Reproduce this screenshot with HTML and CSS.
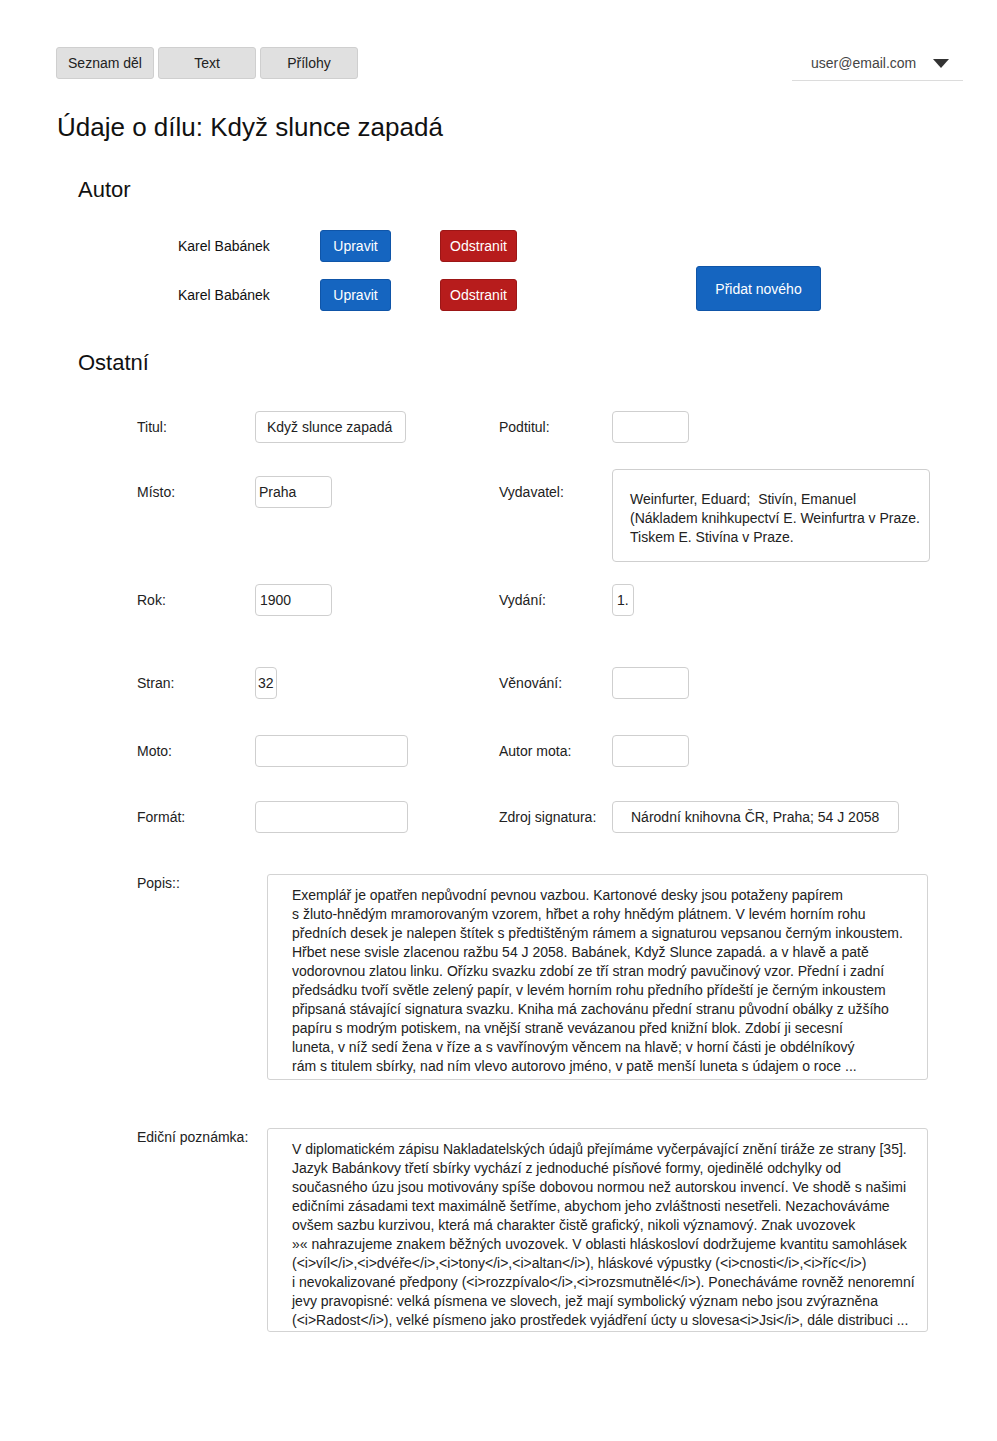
FILE: index.html
```html
<!DOCTYPE html>
<html lang="cs">
<head>
<meta charset="utf-8">
<title>Údaje o dílu</title>
<link rel="stylesheet" href="styles.css">
</head>
<body>
<header class="topbar">
  <nav class="tabs">
    <button class="tab">Seznam děl</button>
    <button class="tab">Text</button>
    <button class="tab">Přílohy</button>
  </nav>
  <div class="user">
    <span class="user-mail">user@email.com</span>
    <svg class="caret" width="16" height="9" viewBox="0 0 16 9"><path d="M0 0H16L8 9Z"/></svg>
  </div>
</header>

<h1 class="title">Údaje o dílu: Když slunce zapadá</h1>

<h2 class="section">Autor</h2>
<div class="authors">
  <div class="author-list">
    <div class="author">
      <span class="author-name">Karel Babánek</span>
      <button class="btn btn-blue btn-edit">Upravit</button>
      <button class="btn btn-red btn-del">Odstranit</button>
    </div>
    <div class="author">
      <span class="author-name">Karel Babánek</span>
      <button class="btn btn-blue btn-edit">Upravit</button>
      <button class="btn btn-red btn-del">Odstranit</button>
    </div>
  </div>
  <button class="btn btn-blue btn-add">Přidat nového</button>
</div>

<h2 class="section section-other">Ostatní</h2>

<div class="form">
  <div class="row row-1">
    <span class="label">Titul:</span>
    <div class="cell"><span class="field f-titul">Když slunce zapadá</span></div>
    <span class="label label-2">Podtitul:</span>
    <div class="cell"><span class="field f-small"></span></div>
  </div>

  <div class="row row-2">
    <span class="label shift">Místo:</span>
    <div class="cell"><span class="field f-short shift">Praha</span></div>
    <span class="label label-2 shift">Vydavatel:</span>
    <div class="cell"><div class="box-publisher">Weinfurter, Eduard;&nbsp; Stivín, Emanuel<br>(Nákladem knihkupectví E. Weinfurtra v Praze.<br>Tiskem E. Stivína v Praze.</div></div>
  </div>

  <div class="row row-3">
    <span class="label">Rok:</span>
    <div class="cell"><span class="field f-short f-year">1900</span></div>
    <span class="label label-2">Vydání:</span>
    <div class="cell"><span class="field f-tiny">1.</span></div>
  </div>

  <div class="row row-4">
    <span class="label">Stran:</span>
    <div class="cell"><span class="field f-tiny f-pages">32</span></div>
    <span class="label label-2">Věnování:</span>
    <div class="cell"><span class="field f-small"></span></div>
  </div>

  <div class="row row-5">
    <span class="label">Moto:</span>
    <div class="cell"><span class="field f-wide"></span></div>
    <span class="label label-2">Autor mota:</span>
    <div class="cell"><span class="field f-small"></span></div>
  </div>

  <div class="row row-6">
    <span class="label">Formát:</span>
    <div class="cell"><span class="field f-wide"></span></div>
    <span class="label label-2">Zdroj signatura:</span>
    <div class="cell"><span class="field f-source">Národní knihovna ČR, Praha; 54 J 2058</span></div>
  </div>

  <div class="row row-desc">
    <span class="label label-long">Popis::</span>
    <div class="textbox tb-desc">Exemplář je opatřen nepůvodní pevnou vazbou. Kartonové desky jsou potaženy papírem<br>s žluto-hnědým mramorovaným vzorem, hřbet a rohy hnědým plátnem. V levém horním rohu<br>předních desek je nalepen štítek s předtištěným rámem a signaturou vepsanou černým inkoustem.<br>Hřbet nese svisle zlacenou ražbu 54 J 2058. Babánek, Když Slunce zapadá. a v hlavě a patě<br>vodorovnou zlatou linku. Ořízku svazku zdobí ze tří stran modrý pavučinový vzor. Přední i zadní<br>předsádku tvoří světle zelený papír, v levém horním rohu předního přídeští je černým inkoustem<br>připsaná stávající signatura svazku. Kniha má zachovánu přední stranu původní obálky z užšího<br>papíru s modrým potiskem, na vnější straně vevázanou před knižní blok. Zdobí ji secesní<br>luneta, v níž sedí žena v říze a s vavřínovým věncem na hlavě; v horní části je obdélníkový<br>rám s titulem sbírky, nad ním vlevo autorovo jméno, v patě menší luneta s údajem o roce ...</div>
  </div>

  <div class="row row-note">
    <span class="label label-long">Ediční poznámka:</span>
    <div class="textbox tb-note">V diplomatickém zápisu Nakladatelských údajů přejímáme vyčerpávající znění tiráže ze strany [35].<br>Jazyk Babánkovy třetí sbírky vychází z jednoduché písňové formy, ojedinělé odchylky od<br>současného úzu jsou motivovány spíše dobovou normou než autorskou invencí. Ve shodě s našimi<br>edičními zásadami text maximálně šetříme, abychom jeho zvláštnosti nesetřeli. Nezachováváme<br>ovšem sazbu kurzivou, která má charakter čistě grafický, nikoli významový. Znak uvozovek<br>»« nahrazujeme znakem běžných uvozovek. V oblasti hláskosloví dodržujeme kvantitu samohlásek<br>(&lt;i&gt;víl&lt;/i&gt;,&lt;i&gt;dvéře&lt;/i&gt;,&lt;i&gt;tony&lt;/i&gt;,&lt;i&gt;altan&lt;/i&gt;), hláskové výpustky (&lt;i&gt;cnosti&lt;/i&gt;,&lt;i&gt;říc&lt;/i&gt;)<br>i nevokalizované předpony (&lt;i&gt;rozzpívalo&lt;/i&gt;,&lt;i&gt;rozsmutnělé&lt;/i&gt;). Ponecháváme rovněž nenoremní<br>jevy pravopisné: velká písmena ve slovech, jež mají symbolický význam nebo jsou zvýrazněna<br>(&lt;i&gt;Radost&lt;/i&gt;), velké písmeno jako prostředek vyjádření úcty u slovesa&lt;i&gt;Jsi&lt;/i&gt;, dále distribuci ...</div>
  </div>
</div>
</body>
</html>
```

FILE: styles.css
```css
* { box-sizing: border-box; }

body {
  margin: 0;
  font-family: "Liberation Sans", Arial, sans-serif;
  font-size: 14px;
  color: #222;
  background: #fff;
}

button {
  font-family: inherit;
  font-size: 14px;
  cursor: pointer;
}

/* Top bar */
.topbar {
  display: flex;
  justify-content: space-between;
  align-items: flex-start;
  padding: 47px 34px 0 56px;
}

.tabs {
  display: flex;
  gap: 4px;
}

.tab {
  width: 98px;
  height: 32px;
  padding: 0;
  background: #e0e0e0;
  border: 1px solid #cfcfcf;
  border-radius: 3px;
  color: #222;
}

.user {
  width: 171px;
  height: 34px;
  display: flex;
  align-items: center;
  padding: 0 0 1px 19px;
  border-bottom: 1px solid #dcdcdc;
  color: #444;
}

.caret {
  margin-left: 17px;
  fill: #333;
}

/* Headings */
.title {
  margin: 31px 0 0 57px;
  font-size: 26px;
  line-height: 30px;
  font-weight: normal;
  color: #111;
}

.section {
  margin: 35px 0 0 78px;
  font-size: 22px;
  line-height: 26px;
  font-weight: normal;
  color: #111;
}

.section-other { margin-top: 39px; }

/* Authors */
.authors {
  display: flex;
  align-items: flex-end;
  margin: 27px 0 0 178px;
}

.author-list {
  display: flex;
  flex-direction: column;
  gap: 17px;
}

.author {
  display: flex;
  align-items: center;
}

.author-name {
  width: 142px;
  color: #111;
}

.btn {
  height: 32px;
  padding: 0;
  color: #fff;
  border-radius: 3px;
}

.btn-blue {
  background: #1565c0;
  border: 1px solid #0f55a8;
}

.btn-red {
  background: #b71c1c;
  border: 1px solid #9c1616;
}

.btn-edit { width: 71px; }

.btn-del {
  width: 77px;
  margin-left: 49px;
}

.btn-add {
  width: 125px;
  height: 45px;
  margin-left: 179px;
}

/* Form */
.form {
  margin: 35px 0 0 137px;
}

.row {
  display: flex;
  align-items: flex-start;
}

.row-2 { margin-top: 26px; }
.row-3 { margin-top: 22px; }
.row-4 { margin-top: 51px; }
.row-5 { margin-top: 36px; }
.row-6 { margin-top: 34px; }
.row-desc { margin-top: 41px; }
.row-note { margin-top: 48px; }

.label {
  width: 118px;
  line-height: 32px;
  color: #222;
}

.label-2 { width: 113px; }

.label-long {
  width: 130px;
  line-height: 19px;
}

.cell {
  width: 244px;
  display: flex;
}

.cell:last-child { width: auto; }

.shift { margin-top: 7px; }

.field {
  display: block;
  height: 32px;
  line-height: 30px;
  border: 1px solid #cfcfcf;
  border-radius: 4px;
  color: #222;
  white-space: nowrap;
}

.f-titul {
  width: 151px;
  padding: 0 11px;
}

.f-small { width: 77px; }

.f-short {
  width: 77px;
  padding-left: 3px;
}

.f-year { padding-left: 4px; }

.f-tiny {
  width: 22px;
  padding-left: 4px;
}

.f-pages { padding-left: 2px; }

.f-wide { width: 153px; }

.f-source {
  width: 287px;
  padding-left: 18px;
}

.box-publisher {
  width: 318px;
  height: 93px;
  padding: 20px 8px 0 17px;
  line-height: 19px;
  border: 1px solid #cfcfcf;
  border-radius: 4px;
  white-space: nowrap;
  color: #222;
}

.textbox {
  width: 661px;
  padding: 11px 0 0 24px;
  line-height: 19px;
  border: 1px solid #d3d3d3;
  border-radius: 3px;
  white-space: nowrap;
  overflow: hidden;
  color: #222;
}

.tb-desc { height: 206px; }
.tb-note { height: 204px; }
```
